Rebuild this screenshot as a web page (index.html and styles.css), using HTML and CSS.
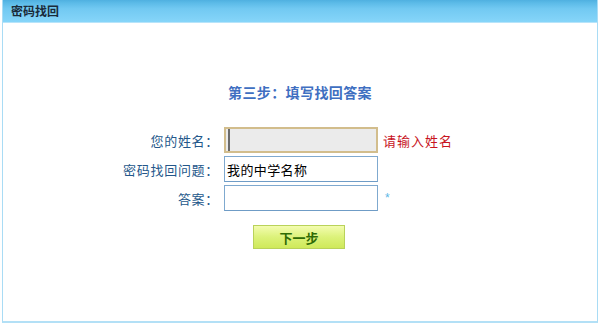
FILE: index.html
```html
<html>

<head>
    <link rel="stylesheet" href="styles.css">
</head>

<body>
    <div class="panel">
        <div class="panel-head">密码找回</div>
        <div class="panel-body">
            <h2 class="step">第三步：填写找回答案</h2>
            <div class="form">
                <label for="name">您的姓名：</label>
                <div class="field">
                    <input type="text" id="name" class="input input-error">
                    <span class="msg-error">请输入姓名</span>
                </div>
                <label for="question">密码找回问题：</label>
                <div class="field">
                    <input type="text" id="question" class="input" value="我的中学名称">
                </div>
                <label for="answer">答案：</label>
                <div class="field">
                    <input type="text" id="answer" class="input">
                    <span class="required">*</span>
                </div>
            </div>
            <div class="actions">
                <button class="btn-next">下一步</button>
            </div>
        </div>
    </div>
</body>

</html>
```

FILE: styles.css
```css
body {
    margin: 0;
    background: #fff;
    font-family: 'Liberation Sans', 'Noto Sans CJK SC', sans-serif;
    font-size: 13px;
}

.panel {
    margin: 0 1px 0 2px;
    height: 323px;
    box-sizing: border-box;
    border: 1px solid #a9dcf5;
    border-top: none;
    border-bottom: 2px solid #b3e0f6;
}

.panel-head {
    height: 22px;
    line-height: 24px;
    padding-left: 8px;
    font-size: 12px;
    font-weight: bold;
    color: #1a2b3a;
    background: linear-gradient(#4fb0e0 0, #5cbbe8 3px, #72c9f2 40%, #86d5f9 100%);
    border-bottom: 1px solid #b7e4fa;
}

.panel-body {
    padding-top: 61px;
}

.step {
    margin: 0 0 25px;
    text-align: center;
    font-size: 14px;
    font-weight: bold;
    color: #3f6fc1;
    line-height: 18px;
    letter-spacing: 0.4px;
}

.form {
    display: grid;
    grid-template-columns: 221px 1fr;
    row-gap: 3px;
    align-items: center;
}

.form label {
    text-align: right;
    color: #24578a;
    padding-right: 5px;
    letter-spacing: 0.7px;
}

.field {
    display: flex;
    align-items: center;
    gap: 5px;
}

.input {
    width: 154px;
    height: 26px;
    box-sizing: border-box;
    margin: 0;
    padding: 0 2px;
    font-family: 'Noto Sans CJK SC', sans-serif;
    font-size: 13px;
    letter-spacing: 0.4px;
    color: #000;
    background: #fff;
    border: 1px solid #7fa9cf;
    border-bottom-color: #6f9cc6;
}

.input-error {
    background: #ebebeb;
    border: 2px solid #d2bd8c;
    box-shadow: inset 2px 0 0 #ebebeb, inset 4px 0 0 #6a6a6a;
}

.msg-error {
    color: #c8141e;
    font-size: 13px;
    letter-spacing: 1px;
}

.required {
    color: #5ab7e6;
    font-size: 12px;
    padding-left: 2px;
}

.actions {
    padding: 14px 0 0 250px;
}

.btn-next {
    width: 92px;
    height: 24px;
    font-family: 'Noto Sans CJK SC', sans-serif;
    font-size: 13px;
    font-weight: bold;
    color: #2f6b04;
    background: linear-gradient(#f3fcb0, #dcf27a 50%, #cfe95a);
    border: 1px solid #b9d25a;
    cursor: pointer;
}
```
